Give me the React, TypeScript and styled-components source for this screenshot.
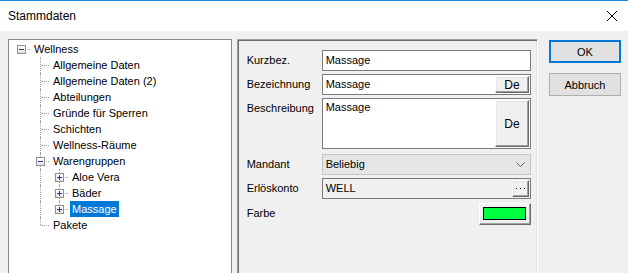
import styled, { createGlobalStyle } from "styled-components"

const GlobalStyle = createGlobalStyle`
    html, body {
        margin: 0;
        padding: 0;
        background: #f0f0f0;
        overflow: hidden;
    }
    body {
        font-family: 'Liberation Sans', Arial, sans-serif;
        font-size: 11px;
        color: #000;
    }
`

const Window = styled.div`
    width: 628px;
    height: 273px;
    display: flex;
    flex-direction: column;
    background: #f0f0f0;
    overflow: hidden;
`

const TitleBar = styled.div`
    height: 30px;
    border-top: 1px solid #1883d7;
    background: #ffffff;
    display: flex;
    align-items: center;
    justify-content: space-between;
    padding: 0 11px 0 8px;
    flex-shrink: 0;
`

const Title = styled.span`
    font-size: 12px;
`

const Body = styled.div`
    display: flex;
    align-items: flex-start;
    padding: 8px 7px 0 8px;
    gap: 5px;
`

const TreeBox = styled.div`
    width: 223px;
    height: 250px;
    background: #ffffff;
    border: 1px solid #828790;
    padding: 1px 0 0 3px;
    box-sizing: content-box;
`

const Row = styled.div`
    display: flex;
    height: 16px;
    align-items: stretch;
`

const Cell = styled.div<{ $line?: boolean }>`
    width: 19px;
    position: relative;
    flex-shrink: 0;
    &::before {
        content: '';
        display: ${p => (p.$line ? "block" : "none")};
        position: absolute;
        left: 9px;
        top: 0;
        bottom: 0;
        border-left: 1px dotted #a0a0a0;
    }
`

const Connector = styled.div<{ $up: boolean; $down: boolean }>`
    width: 19px;
    position: relative;
    flex-shrink: 0;
    &::before {
        content: '';
        position: absolute;
        left: 9px;
        top: ${p => (p.$up ? "0" : "8px")};
        bottom: ${p => (p.$down ? "0" : "8px")};
        border-left: 1px dotted #a0a0a0;
    }
    &::after {
        content: '';
        position: absolute;
        left: 10px;
        right: 1px;
        top: 8px;
        border-top: 1px dotted #a0a0a0;
    }
`

const Expander = styled.div`
    position: absolute;
    z-index: 1;
    left: 5px;
    top: 4px;
    width: 7px;
    height: 7px;
    border: 1px solid #919191;
    background: linear-gradient(#ffffff, #e3e3e3);
    &::before {
        content: '';
        position: absolute;
        left: 1px;
        top: 3px;
        width: 5px;
        height: 1px;
        background: #1c3f84;
    }
`

const PlusBar = styled.div`
    position: absolute;
    left: 3px;
    top: 1px;
    width: 1px;
    height: 5px;
    background: #1c3f84;
`

const Label = styled.span<{ $selected?: boolean }>`
    margin-left: 1px;
    padding: 0 2px;
    line-height: 16px;
    white-space: nowrap;
    background: ${p => (p.$selected ? "#0078d7" : "transparent")};
    color: ${p => (p.$selected ? "#ffffff" : "#000000")};
`

const Panel = styled.div`
    width: 290px;
    height: 250px;
    border: 1px solid;
    border-color: #a0a0a0 #ffffff #ffffff #a0a0a0;
    box-shadow: inset 1px 1px 0 #696969, inset -1px -1px 0 #e3e3e3;
    padding: 10px 6px 0 9px;
    display: flex;
    flex-direction: column;
`

const FieldRow = styled.div<{ $h?: number; $gap?: number }>`
    display: flex;
    height: ${p => p.$h ?? 21}px;
    margin-bottom: ${p => p.$gap ?? 3}px;
    align-items: flex-start;
`

const FieldLabel = styled.div`
    width: 75px;
    flex-shrink: 0;
    line-height: 21px;
`

type EditKind = "edit" | "combo" | "readonly"

const editBorder: Record<EditKind, string> = {
    edit: "#7a7a7a",
    combo: "#c6c6c6",
    readonly: "#7a7a7a",
}

const editBg: Record<EditKind, string> = {
    edit: "#ffffff",
    combo: "#e5e5e5",
    readonly: "#f0f0f0",
}

const Edit = styled.div<{ $kind?: EditKind }>`
    flex: 1;
    height: 100%;
    box-sizing: border-box;
    border: 1px solid ${p => editBorder[p.$kind ?? "edit"]};
    background: ${p => editBg[p.$kind ?? "edit"]};
    display: flex;
    align-items: flex-start;
    justify-content: space-between;
    padding: 1px;
`

const EditText = styled.span<{ $top?: boolean }>`
    padding-left: 2px;
    line-height: ${p => (p.$top ? "14px" : "17px")};
`

const ClassicButton = styled.div<{ $w: number; $h: number }>`
    width: ${p => p.$w}px;
    height: ${p => p.$h}px;
    box-sizing: border-box;
    background: #f0f0f0;
    border-top: 1px solid #ffffff;
    border-left: 1px solid #ffffff;
    border-right: 1px solid #696969;
    border-bottom: 1px solid #696969;
    box-shadow: inset -1px -1px 0 #a0a0a0, inset 1px 1px 0 #e3e3e3;
    display: flex;
    align-items: center;
    justify-content: center;
    font-size: 12px;
`

const ComboArrow = styled.div`
    width: 17px;
    height: 17px;
    display: flex;
    align-items: center;
    justify-content: center;
`

const ColorRow = styled.div`
    display: flex;
    align-items: flex-start;
    height: 21px;
`

const Spacer = styled.div`
    flex: 1;
`

const ColorButton = styled.div`
    width: 52px;
    height: 22px;
    box-sizing: border-box;
    background: #f0f0f0;
    border-top: 1px solid #ffffff;
    border-left: 1px solid #ffffff;
    border-right: 1px solid #696969;
    border-bottom: 1px solid #696969;
    box-shadow: inset -1px -1px 0 #a0a0a0;
    padding: 3px 4px 4px 3px;
`

const Swatch = styled.div<{ $color: string }>`
    width: 100%;
    height: 100%;
    box-sizing: border-box;
    border: 1px solid #000;
    background: ${p => p.$color};
`

const ButtonColumn = styled.div`
    display: flex;
    flex-direction: column;
    gap: 10px;
    margin-left: 6px;
    padding-top: 1px;
`

const DialogButton = styled.div<{ $default?: boolean }>`
    width: 72px;
    height: 23px;
    box-sizing: border-box;
    background: #e1e1e1;
    border: ${p => (p.$default ? "2px solid #0078d7" : "1px solid #adadad")};
    display: flex;
    align-items: center;
    justify-content: center;
    font-size: 11px;
`

type Node = {
    label: string
    level: number
    guides: boolean[]
    up: boolean
    down: boolean
    box?: "plus" | "minus"
    selected?: boolean
}

const tree: Node[] = [
    { label: "Wellness", level: 0, guides: [], up: false, down: false, box: "minus" },
    { label: "Allgemeine Daten", level: 1, guides: [false], up: true, down: true },
    { label: "Allgemeine Daten (2)", level: 1, guides: [false], up: true, down: true },
    { label: "Abteilungen", level: 1, guides: [false], up: true, down: true },
    { label: "Gründe für Sperren", level: 1, guides: [false], up: true, down: true },
    { label: "Schichten", level: 1, guides: [false], up: true, down: true },
    { label: "Wellness-Räume", level: 1, guides: [false], up: true, down: true },
    { label: "Warengruppen", level: 1, guides: [false], up: true, down: true, box: "minus" },
    { label: "Aloe Vera", level: 2, guides: [false, true], up: true, down: true, box: "plus" },
    { label: "Bäder", level: 2, guides: [false, true], up: true, down: true, box: "plus" },
    { label: "Massage", level: 2, guides: [false, true], up: true, down: false, box: "plus", selected: true },
    { label: "Pakete", level: 1, guides: [false], up: true, down: false },
]

const App = () => {
    return (
        <Window>
            <GlobalStyle />
            <TitleBar>
                <Title>Stammdaten</Title>
                <svg width="10" height="10" viewBox="0 0 10 10">
                    <path d="M0 0 L10 10 M10 0 L0 10" stroke="#000" strokeWidth="1" />
                </svg>
            </TitleBar>
            <Body>
                <TreeBox>
                    {tree.map(n => (
                        <Row key={n.label}>
                            {n.guides.map((g, i) => (
                                <Cell key={i} $line={g} />
                            ))}
                            <Connector $up={n.up} $down={n.down}>
                                {n.box && <Expander>{n.box === "plus" && <PlusBar />}</Expander>}
                            </Connector>
                            <Label $selected={n.selected}>{n.label}</Label>
                        </Row>
                    ))}
                </TreeBox>
                <Panel>
                    <FieldRow>
                        <FieldLabel>Kurzbez.</FieldLabel>
                        <Edit><EditText>Massage</EditText></Edit>
                    </FieldRow>
                    <FieldRow>
                        <FieldLabel>Bezeichnung</FieldLabel>
                        <Edit>
                            <EditText>Massage</EditText>
                            <ClassicButton $w={34} $h={17}>De</ClassicButton>
                        </Edit>
                    </FieldRow>
                    <FieldRow $h={51} $gap={5}>
                        <FieldLabel>Beschreibung</FieldLabel>
                        <Edit>
                            <EditText $top>Massage</EditText>
                            <ClassicButton $w={34} $h={47}>De</ClassicButton>
                        </Edit>
                    </FieldRow>
                    <FieldRow>
                        <FieldLabel>Mandant</FieldLabel>
                        <Edit $kind="combo">
                            <EditText>Beliebig</EditText>
                            <ComboArrow>
                                <svg width="9" height="5" viewBox="0 0 9 5">
                                    <path d="M0.5 0.5 L4.5 4.5 L8.5 0.5" stroke="#606060" fill="none" />
                                </svg>
                            </ComboArrow>
                        </Edit>
                    </FieldRow>
                    <FieldRow $gap={4}>
                        <FieldLabel>Erlöskonto</FieldLabel>
                        <Edit $kind="readonly">
                            <EditText>WELL</EditText>
                            <ClassicButton $w={17} $h={17}>
                                <svg width="9" height="3" viewBox="0 0 9 3">
                                    <rect x="0" y="1" width="1" height="1" fill="#000" />
                                    <rect x="4" y="1" width="1" height="1" fill="#000" />
                                    <rect x="8" y="1" width="1" height="1" fill="#000" />
                                </svg>
                            </ClassicButton>
                        </Edit>
                    </FieldRow>
                    <ColorRow>
                        <FieldLabel>Farbe</FieldLabel>
                        <Spacer />
                        <ColorButton>
                            <Swatch $color="#00ff40" />
                        </ColorButton>
                    </ColorRow>
                </Panel>
                <ButtonColumn>
                    <DialogButton $default>OK</DialogButton>
                    <DialogButton>Abbruch</DialogButton>
                </ButtonColumn>
            </Body>
        </Window>
    )
}

export default App
